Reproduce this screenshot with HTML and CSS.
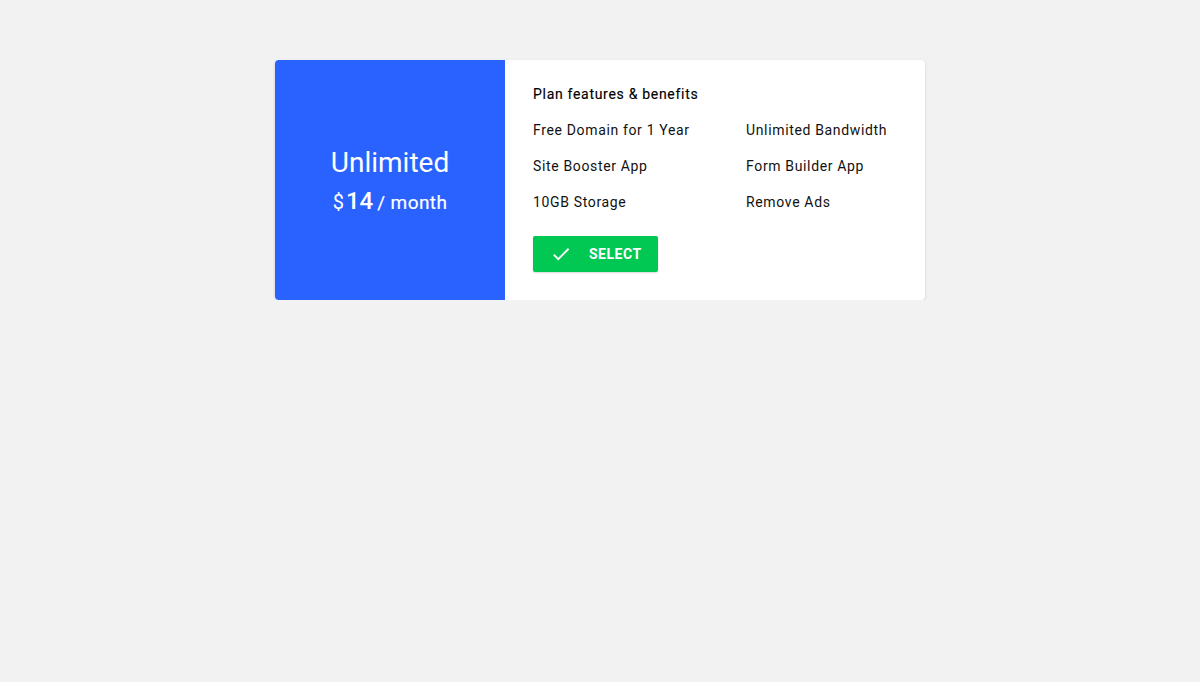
FILE: index.html
```html
<!DOCTYPE html>
<html lang="en">
<head>
    <meta charset="UTF-8">
    <meta name="viewport" content="width=device-width, initial-scale=1.0">
    <title>Plan</title>
    <link rel="stylesheet" href="styles.css">
</head>
<body>
    <div class="plan_card">
        <div class="plan_name">
            <div class="plan_title">Unlimited</div>
            <div class="plan_price">
                <span class="currency">$</span>
                <span class="amount">14</span>
                <span class="period">/ month</span>
            </div>
        </div>
        <div class="plan_details">
            <div class="details_title">Plan features &amp; benefits</div>
            <div class="features">
                <div>Free Domain for 1 Year</div>
                <div>Unlimited Bandwidth</div>
                <div>Site Booster App</div>
                <div>Form Builder App</div>
                <div>10GB Storage</div>
                <div>Remove Ads</div>
            </div>
            <button class="select_btn">
                <svg width="22" height="22" viewBox="0 0 24 24"><path d="M9 16.17L4.83 12l-1.42 1.41L9 19 21 7l-1.41-1.41z" fill="#fff"/></svg>
                <span>SELECT</span>
            </button>
        </div>
    </div>
</body>
</html>
```

FILE: styles.css
```css
* {
    box-sizing: border-box;
}

body {
    margin: 0;
    background-color: #f2f2f2;
    font-family: Roboto, "Liberation Sans", sans-serif;
}

.plan_card {
    width: 650px;
    margin: 60px auto 0;
    display: flex;
    background-color: #fff;
    border-radius: 4px;
    box-shadow: 0 1px 3px rgba(0, 0, 0, 0.15);
    overflow: hidden;
}

.plan_name {
    width: 230px;
    background-color: #2962ff;
    color: #fff;
    display: flex;
    flex-direction: column;
    align-items: center;
    justify-content: center;
}

.plan_title {
    font-size: 28px;
    line-height: 36px;
}

.plan_price {
    display: flex;
    align-items: baseline;
    margin-top: 6px;
}

.currency {
    font-size: 20px;
    margin-right: 2px;
}

.amount {
    font-size: 24px;
    font-weight: 500;
    margin-right: 4px;
}

.period {
    font-size: 19px;
    letter-spacing: 0.4px;
    -webkit-text-stroke: 0.2px #fff;
}

.plan_details {
    flex: 1;
    padding: 24px 28px 28px;
    color: #111;
    font-size: 14px;
    letter-spacing: 0.65px;
}

.details_title {
    line-height: 20px;
    letter-spacing: 0.7px;
    color: #000;
    -webkit-text-stroke: 0.15px #000;
}

.features {
    display: grid;
    grid-template-columns: 213px 1fr;
    row-gap: 16px;
    margin-top: 16px;
    line-height: 20px;
}

.select_btn {
    margin-top: 24px;
    height: 36px;
    width: 125px;
    border: none;
    border-radius: 2px;
    background-color: #00c853;
    color: #fff;
    font-family: inherit;
    font-size: 14px;
    font-weight: 700;
    letter-spacing: 0.5px;
    display: flex;
    align-items: center;
    padding: 0 0 0 17px;
    gap: 17px;
    box-shadow: 0 1px 2px rgba(0, 0, 0, 0.15);
}
```
